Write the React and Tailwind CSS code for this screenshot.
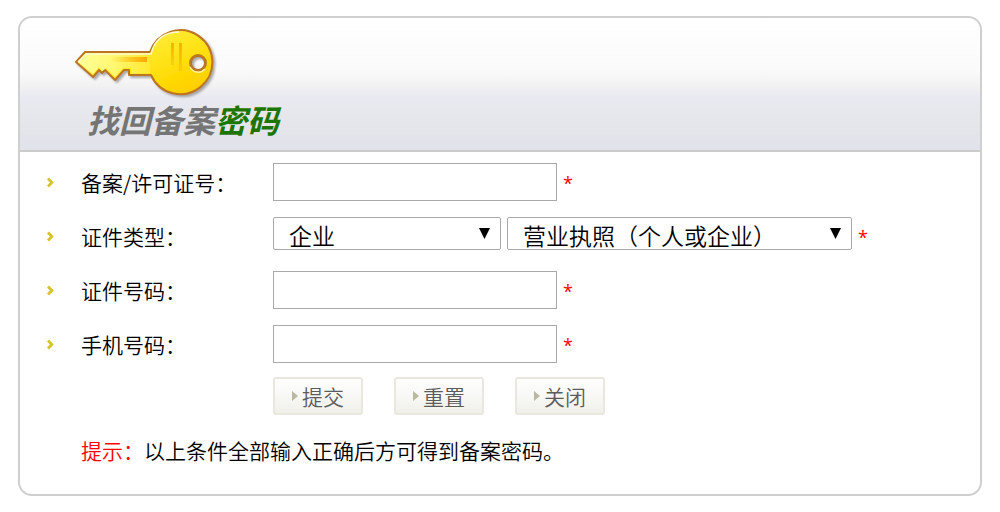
import React from "react";

function KeyIcon() {
  return (
    <svg width="148" height="72" viewBox="0 0 148 72" aria-hidden="true">
      <defs>
        <linearGradient id="keyBody" x1="0" y1="0" x2="1" y2="1">
          <stop offset="0" stopColor="#fff36a" />
          <stop offset="0.5" stopColor="#ffe620" />
          <stop offset="0.75" stopColor="#ffd800" />
          <stop offset="1" stopColor="#ffc800" />
        </linearGradient>
        <linearGradient id="keyBlade" x1="0" y1="0" x2="1" y2="0">
          <stop offset="0" stopColor="#ffff9a" />
          <stop offset="0.5" stopColor="#fff870" />
          <stop offset="1" stopColor="#ffe830" />
        </linearGradient>
        <linearGradient id="keyGroove" x1="0" y1="0" x2="1" y2="0">
          <stop offset="0" stopColor="#ffb400" stopOpacity="0" />
          <stop offset="1" stopColor="#ffa800" />
        </linearGradient>
        <linearGradient id="keyLine" x1="0" y1="0" x2="0" y2="1">
          <stop offset="0" stopColor="#ffb000" />
          <stop offset="1" stopColor="#ffb000" stopOpacity="0.35" />
        </linearGradient>
        <filter id="keyShadow" x="-5%" y="-5%" width="115%" height="120%">
          <feDropShadow dx="2" dy="2" stdDeviation="1" floodColor="#777" floodOpacity="0.6" />
        </filter>
      </defs>
      <g filter="url(#keyShadow)">
        <path
          d="M3 34 L12 24 H77 A32 32 0 1 1 78 47 H56 V42 H51 L42 52 L32 42 L29 45 L26 42 L20 49 Z M118 35 A7 7 0 1 0 132 35 A7 7 0 1 0 118 35 Z"
          fill="url(#keyBody)"
          fillRule="evenodd"
          stroke="#bd7422"
          strokeWidth="2"
          strokeLinejoin="round"
        />
      </g>
      <path d="M5 34 L13 26 H77 V45.500 H58 V40 H50 L42 49 L33 40 L29 43 L26 39 L20 46 Z" fill="url(#keyBlade)" />
      <path d="M5 34 L13 26 H78 C82 10 92 4 106 4" fill="none" stroke="#fffbd5" strokeWidth="1.500" />
      <rect x="38" y="29" width="36" height="5" fill="url(#keyGroove)" />
      <rect x="98" y="15" width="3" height="22" fill="url(#keyLine)" />
      <rect x="106" y="15" width="3" height="28" fill="url(#keyLine)" />
      <circle cx="125" cy="35" r="8" fill="none" stroke="#b97924" strokeWidth="2" />
      <path d="M117 39 A9 9 0 0 0 132 41" fill="none" stroke="#fff3a0" strokeWidth="1.500" />
    </svg>
  );
}

function Row({ label, htmlFor, children }) {
  return (
    <div className="flex h-[38px] items-start">
      <div className="flex h-[38px] w-[61px] shrink-0 items-center pl-[27px]">
        <svg width="8" height="11" viewBox="0 0 8 11" aria-hidden="true">
          <path d="M1 1.500 L4.800 5.500 L1 9.500" fill="none" stroke="#d5c42a" strokeWidth="2.800" />
        </svg>
      </div>
      <label htmlFor={htmlFor} className="flex h-10 w-[192px] shrink-0 items-center text-[21px] whitespace-nowrap">
        {label}
      </label>
      {children}
    </div>
  );
}

function Star() {
  return (
    <span className="flex h-10 items-center pl-1.5 font-['Open_Sans',sans-serif] text-[18px] font-normal text-[#ff0000]">
      *
    </span>
  );
}

function TextField({ id, label }) {
  return (
    <Row label={label} htmlFor={id}>
      <input
        id={id}
        type="text"
        required
        className="h-[38px] w-[284px] min-w-0 border border-[#a9a9a9] bg-white px-2 text-[21px] outline-none"
      />
      <Star />
    </Row>
  );
}

function Select({ id, label, width, options }) {
  return (
    <div className={"relative min-w-0 " + width}>
      <select
        id={id}
        aria-label={label}
        className="block h-[33px] w-full appearance-none rounded-xs border border-[#a9a9a9] bg-white pt-0.5 pr-8 pl-[15px] text-[23px] leading-7 text-black outline-none"
      >
        {options.map((o) => (
          <option key={o}>{o}</option>
        ))}
      </select>
      <svg className="pointer-events-none absolute top-[11px] right-[11px]" width="11" height="11" viewBox="0 0 11 11" aria-hidden="true">
        <path d="M0 0 H11 L5.500 11 Z" fill="#000" />
      </svg>
    </div>
  );
}

function ActionButton({ type, children }) {
  return (
    <button
      type={type}
      className="flex h-[38px] w-[90px] items-center gap-1 rounded-[3px] border-2 border-[#e8e8de] bg-linear-to-b from-white to-[#f0f0eb] pl-[17px] text-[21px] font-[350] text-[#5c5c5c]"
    >
      <svg width="6" height="10" viewBox="0 0 6 10" className="shrink-0" aria-hidden="true">
        <path d="M0 0 L6 5 L0 10 Z" fill="#b9b9a2" />
      </svg>
      <span className="leading-7 whitespace-nowrap">{children}</span>
    </button>
  );
}

export default function App() {
  return (
    <main className="bg-white px-[18px] py-4 font-['Noto_Sans_CJK_SC',sans-serif] font-[350] text-black">
      <section className="overflow-hidden rounded-[14px] border-2 border-[#cfcfcf] bg-white">
        <header className="flex h-[134px] flex-col border-b-2 border-[#cbcbcb] bg-[linear-gradient(to_bottom,#ffffff_0%,#fafafa_40%,#f3f3f3_50%,#e9e9f2_60%,#e6e7eb_75%,#e1e2ea_100%)] pt-2.5">
          <div className="pl-[53px]">
            <KeyIcon />
          </div>
          <h1 className="pl-[67px] text-[32px] leading-[38px] font-bold whitespace-nowrap text-[#757575] italic">
            找回备案<span className="text-[#1d7600]">密码</span>
          </h1>
        </header>
        <form className="pt-[11px] pb-7" onSubmit={(e) => e.preventDefault()}>
          <div className="flex flex-col gap-4">
            <TextField id="license" label="备案/许可证号：" />
            <Row label="证件类型：" htmlFor="owner">
              <Select id="owner" label="证件类型" width="w-[228px]" options={["企业", "个人"]} />
              <div className="w-1.5 shrink-0" />
              <Select id="doc" label="证件" width="w-[345px]" options={["营业执照（个人或企业）"]} />
              <Star />
            </Row>
            <TextField id="number" label="证件号码：" />
            <TextField id="phone" label="手机号码：" />
          </div>
          <div className="mt-3.5 flex gap-[31px] pl-[253px]">
            <ActionButton type="submit">提交</ActionButton>
            <ActionButton type="reset">重置</ActionButton>
            <ActionButton type="button">关闭</ActionButton>
          </div>
          <p className="mt-[19px] pl-[61px] text-[21px] leading-8">
            <span className="text-[#ff0000]">提示：</span>以上条件全部输入正确后方可得到备案密码。
          </p>
        </form>
      </section>
    </main>
  );
}
